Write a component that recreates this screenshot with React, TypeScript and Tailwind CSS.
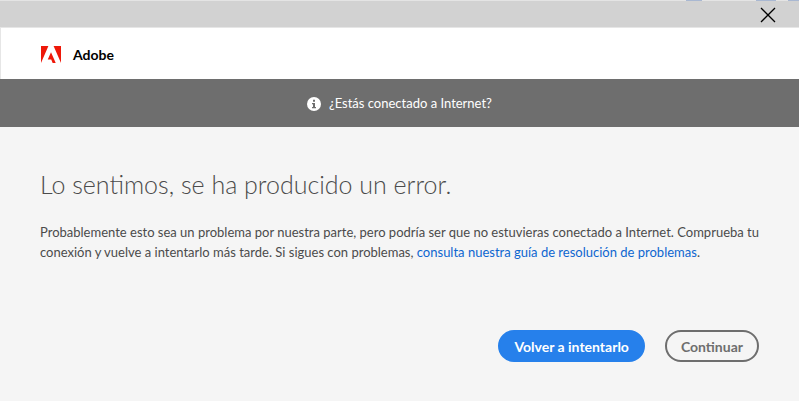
import { ReactNode } from 'react';
import clsx from 'clsx';

function AdobeLogo() {
  return (
    <svg className="w-5 h-[17px]" viewBox="0 1.376 24 21.248" preserveAspectRatio="none" fill="#ee1809" aria-hidden="true">
      <path d="M13.966 22.624l-1.69-4.281H8.122l3.892-9.144 5.662 13.425zM8.884 1.376H0v21.248zm6.233 0L24 22.624V1.376z" />
    </svg>
  );
}

function InfoIcon() {
  return (
    <svg className="w-[14px] h-[14px]" viewBox="0 0 14 14" aria-hidden="true">
      <circle cx="7" cy="7" r="7" fill="#fff" />
      <path d="M6 2.8h2v2H6zM5 6h3v4h1v1.200H5V10h1V7.200H5z" fill="#6e6e6e" />
    </svg>
  );
}

function TitleBar() {
  return (
    <div className="bg-[#d2d2d2] border-b border-[#e6e6e6]">
      <div className="flex justify-end h-px bg-[#e4e4e4]">
        <span className="w-4 mr-[54px] bg-[#a9b8d2]" />
        <span className="w-5 mr-3 bg-[#a9b8d2]" />
        <span className="w-[11px] bg-[#a9b8d2]" />
      </div>
      <div className="flex justify-end h-[26px] pr-[23px]">
        <button type="button" aria-label="Cerrar" className="flex items-center pt-[2px]">
          <svg className="w-4 h-4" viewBox="0 0 16 16" stroke="#000" strokeWidth="1.3" aria-hidden="true">
            <path d="M1 1l14 14M15 1L1 15" />
          </svg>
        </button>
      </div>
    </div>
  );
}

function PillButton({ children, className }: { children: ReactNode; className?: string }) {
  return (
    <button
      type="button"
      className={clsx('h-8 px-[14px] pt-[2px] rounded-full border-2 text-sm leading-5 font-bold whitespace-nowrap', className)}
    >
      {children}
    </button>
  );
}

export default function App() {
  return (
    <div className="min-h-screen bg-[#f5f5f5] text-[#4b4b4b] font-['Lato',sans-serif]">
      <TitleBar />
      <header className="flex items-center gap-3 h-[51px] pl-10 bg-white border-l border-[#e6e6e6] pt-[2px]">
        <AdobeLogo />
        <span className="text-sm font-bold text-black">Adobe</span>
      </header>
      <div className="flex items-center justify-center gap-2 h-12 pt-[2px] bg-[#6e6e6e] text-white text-[13px]">
        <InfoIcon />
        <span>¿Estás conectado a Internet?</span>
      </div>
      <main className="px-10 pt-[39px] pb-10">
        <h1 className="text-[25px] leading-9 font-light">Lo sentimos, se ha producido un error.</h1>
        <p className="mt-5 text-[13px] leading-5">
          Probablemente esto sea un problema por nuestra parte, pero podría ser que no estuvieras conectado a Internet. Comprueba tu
          conexión y vuelve a intentarlo más tarde. Si sigues con problemas,{' '}
          <a href="#" className="text-[#0d66d0]">consulta nuestra guía de resolución de problemas</a>.
        </p>
        <div className="flex justify-end gap-5 mt-[68px]">
          <PillButton className="bg-[#2680eb] border-[#2680eb] text-white">Volver a intentarlo</PillButton>
          <PillButton className="border-[#6e6e6e] text-[#6e6e6e]">Continuar</PillButton>
        </div>
      </main>
    </div>
  );
}
